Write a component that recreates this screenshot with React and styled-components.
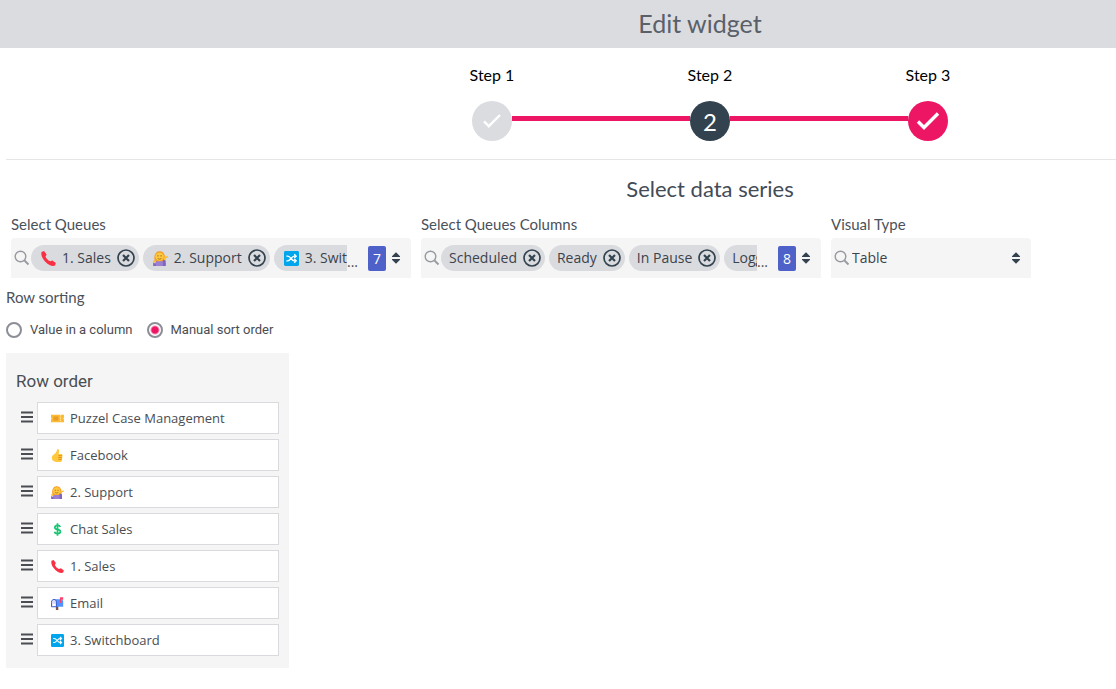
import React, { useState } from "react";
import styled, { createGlobalStyle } from "styled-components";

const GlobalStyle = createGlobalStyle`
  * {
    box-sizing: border-box;
  }

  body {
    margin: 0;
    background: #fff;
    color: #4a4d52;
    font-family: "Open Sans", sans-serif;
    font-size: 14px;
    overflow-x: hidden;
  }
`;

const Header = styled.header`
  display: flex;
  align-items: center;
  justify-content: center;
  height: 48px;
  padding: 0 0 2px 284px;
  background: #dbdce0;
`;

const Title = styled.h1`
  margin: 0;
  color: #5a6069;
  font-family: Lato, sans-serif;
  font-size: 25px;
  font-weight: 400;
  line-height: 32px;
`;

const Content = styled.main`
  padding-left: 6px;
`;

const Steps = styled.ol`
  display: flex;
  justify-content: center;
  margin: 0;
  padding: 15px 0 18px 298px;
  border-bottom: 1px solid #e6e6e8;
  list-style: none;
`;

const StepItem = styled.li`
  width: 218px;
`;

const StepLabel = styled.div`
  margin-bottom: 14px;
  color: #000;
  font-family: Lato, sans-serif;
  font-size: 16px;
  line-height: 24px;
  text-align: center;
`;

const Track = styled.div`
  display: flex;
  align-items: center;
`;

const Line = styled.span`
  flex: 1;
  height: 5px;
  margin-bottom: 5px;
  background: ${(props) => (props.$hidden ? "transparent" : "#ed1664")};
`;

const StepButton = styled.button`
  display: flex;
  align-items: center;
  justify-content: center;
  width: 40px;
  height: 40px;
  padding: 0;
  border: 0;
  border-radius: 50%;
  background: ${(props) => props.$color};
  color: #fff;
  font-family: Lato, sans-serif;
  font-size: 24px;
`;

const SectionTitle = styled.h2`
  margin: 15px 0 12px;
  padding-left: 298px;
  color: #434b56;
  font-family: Lato, sans-serif;
  font-size: 22px;
  font-weight: 400;
  line-height: 28px;
  text-align: center;
`;

const Fields = styled.div`
  display: flex;
  gap: 10px;
  padding-left: 5px;
`;

const Field = styled.div`
  width: ${(props) => (props.$narrow ? "200px" : "400px")};
`;

const Label = styled.label`
  display: block;
  margin-bottom: 5px;
  color: #4b515a;
  font-family: Lato, sans-serif;
  font-size: 15px;
  line-height: 18px;
`;

const Control = styled.div`
  display: flex;
  align-items: center;
  height: 40px;
  padding: 0 10px 0 3px;
  border-radius: 4px 4px 0 0;
  background: #f5f5f5;
`;

const Chips = styled.div`
  display: flex;
  flex: 1;
  gap: 4px;
  min-width: 0;
  margin-left: 1px;
  overflow: hidden;
`;

const ChipBox = styled.span`
  display: flex;
  flex: none;
  align-items: center;
  gap: 6px;
  height: 26px;
  padding: 0 4px 0 ${(props) => (props.$icon ? "10px" : "8px")};
  border-radius: 13px;
  background: #dadbdf;
  color: #3c434c;
  line-height: 20px;
`;

const RemoveButton = styled.button`
  display: flex;
  padding: 0;
  border: 0;
  background: none;
  color: #33424f;
`;

const More = styled.span`
  padding-top: 8px;
  width: 21px;
  line-height: 20px;
`;

const Count = styled.span`
  width: 18px;
  border-radius: 2px;
  background: #4d61c9;
  color: #fff;
  line-height: 25px;
  text-align: center;
`;

const ToggleButton = styled.button`
  display: flex;
  margin-left: 5px;
  padding: 0;
  border: 0;
  background: none;
`;

const Select = styled.select`
  flex: 1;
  min-width: 0;
  padding: 0 2px;
  border: 0;
  appearance: none;
  background: none;
  color: #3c434c;
  font-family: inherit;
  font-size: 14px;
  line-height: 20px;
`;

const Sorting = styled.fieldset`
  margin: 10px 0 0;
  padding: 0;
  border: 0;
`;

const Legend = styled.legend`
  padding: 0;
  color: #4b515a;
  font-family: Lato, sans-serif;
  font-size: 15px;
  line-height: 18px;
`;

const Radios = styled.div`
  display: flex;
  gap: 14px;
  padding: 14px 0;
`;

const RadioLabel = styled.label`
  display: flex;
  align-items: center;
  gap: 8px;
  color: #4a4d52;
  font-family: Roboto, sans-serif;
  font-size: 13px;
  line-height: 19px;
`;

const Radio = styled.input`
  width: 16px;
  height: 16px;
  margin: 0;
  border: 2px solid #8b8e97;
  border-radius: 50%;
  appearance: none;
  background: #fff;

  &:checked {
    background: radial-gradient(circle, #ed1664 3px, #fff 5px);
  }
`;

const Panel = styled.section`
  width: 283px;
  padding: 16px 10px 12px;
  background: #f5f5f5;
`;

const PanelTitle = styled.h3`
  margin: 0 0 9px;
  color: #4a4d52;
  font-family: Roboto, sans-serif;
  font-size: 17px;
  font-weight: 400;
  line-height: 24px;
`;

const Rows = styled.ul`
  display: grid;
  gap: 5px;
  margin: 0;
  padding: 0 0 0 4px;
  list-style: none;
`;

const Row = styled.li`
  display: flex;
  gap: 4px;
`;

const Handle = styled.button`
  display: flex;
  padding: 9px 0 0;
  border: 0;
  background: none;
`;

const RowName = styled.div`
  display: flex;
  flex: 1;
  align-items: center;
  gap: 6px;
  height: 32px;
  padding-left: 13px;
  border: 1px solid #d9dade;
  background: #fff;
  font-size: 13px;
`;

const emojis = {
  phone: (
    <path
      d="M.6 1 3.200 0 6 3.700 4.800 6.200c1.200 2.400 2.600 3.800 5 4.800l2.400-1 3.600 2.800-.8 2.700c-2.400 1.200-6.300.1-9.600-3.200C1.700 8.700-.4 4.500.6 1z"
      fill="#f92f43"
    />
  ),
  person: (
    <>
      <path d="M2 16v-3c0-2.500 2-3.500 5.500-3.500s6 1 6 3.500v3z" fill="#9b7fd1" />
      <path d="M2 11C.5 6 2 .2 7 .2s7 5.300 5 10.800z" fill="#f39a22" />
      <circle cx="7" cy="6" r="4.500" fill="#ffc83d" />
      <path d="M4.500 5.200h1.700M7.800 5.200h1.700M5 8q2 1.400 4 0" fill="none" stroke="#8a5a20" strokeWidth=".8" />
      <path d="m10.800 9.800 1.200-3.600 4-.8v1.400l-2.400 1-.6 3z" fill="#ffbd30" />
      <path d="m10.500 9 3 1v6h-3z" fill="#8164be" />
      <path d="M.2 12 3 14v2H.2z" fill="#8164be" />
      <path d="m.2 9.800 3 .7v2l-3-.7z" fill="#ffbd30" />
    </>
  ),
  shuffle: (
    <>
      <rect width="16" height="16" rx="1.500" fill="#00a6ed" />
      <path
        d="M2.500 5.500H4c3 0 4 5 7 5h2M2.500 10.500H4c3 0 4-5 7-5h2M11 3.500l2 2-2 2M11 8.500l2 2-2 2"
        fill="none"
        stroke="#fff"
        strokeWidth="1.4"
      />
    </>
  ),
  ticket: (
    <>
      <path d="M0 3.500h16v3.500l-1 1 1 1v3.500H0V9l1-1-1-1z" fill="#fcb932" />
      <path d="M3 5.500h6v5H3z" fill="#e89d28" />
      <path d="M11.500 3.500v9" stroke="#fff0bd" strokeDasharray="2 1" />
    </>
  ),
  thumb: (
    <>
      <path
        d="M7.500.3c1.700-.5 2.700.7 2.500 2.200L9.500 6H12c1.700 0 2.200.8 2.100 2l-.6 5.500c-.2 1.700-1 2.500-2.500 2.500H6.500C3.200 16 1 14 1 11.200c0-2.200 1-3.500 2.900-4.700C6 5 7.200 3 7.500.3z"
        fill="#ffc83d"
      />
      <path d="M9 8.200h4.500M9 10.500h4.300M9 12.800h4" stroke="#d67d00" strokeWidth=".9" />
    </>
  ),
  dollar: (
    <path
      d="M11.500 5C11 3.700 9.800 3 8 3 6 3 4.700 4 4.700 5.400 4.700 8.800 11.600 7 11.600 10.500c0 1.500-1.400 2.500-3.600 2.500-2 0-3.300-.8-3.700-2.300M8 .3v15.400"
      fill="none"
      stroke="#16c672"
      strokeWidth="2.100"
    />
  ),
  mailbox: (
    <>
      <path d="M6 11h3v5H6z" fill="#7d5144" />
      <path d="M4 2.800h8.500C14.500 2.800 15 5 15 6.500V12H4z" fill="#5092ff" />
      <path d="M.6 12V6.500C.6 4.200 2 3 3.700 3s3 1.200 3 3.500V12z" fill="#dcd8f5" stroke="#2d53c7" strokeWidth="1.1" />
      <path d="M2 8.500h3.500V11H2z" fill="#fff" />
      <path d="M11 7.500V.3h4v3.200h-2.600v4z" fill="#f8446d" />
    </>
  ),
};

const Emoji = ({ name, size }) => (
  <svg width={size} height={size} viewBox="0 0 16 16" aria-hidden="true">
    {emojis[name]}
  </svg>
);

const SearchIcon = () => (
  <svg width="16" height="16" viewBox="0 0 16 16" fill="none" stroke="#96999f" aria-hidden="true">
    <circle cx="6.500" cy="6.500" r="5.300" strokeWidth="1.4" />
    <path d="m10.500 10.500 4 4" strokeWidth="1.8" />
  </svg>
);

const SortIcon = () => (
  <svg width="10" height="12" viewBox="0 0 10 12" fill="#33424f" aria-hidden="true">
    <path d="M5 .3 9 4.200V5H1v-.8zM1 7h8v.8l-4 3.900-4-3.900z" />
  </svg>
);

const RemoveIcon = () => (
  <svg width="18" height="18" viewBox="0 0 18 18" fill="none" stroke="currentColor" aria-hidden="true">
    <circle cx="9" cy="9" r="8" strokeWidth="1.7" />
    <path d="m6 6 6 6m0-6-6 6" strokeWidth="2.2" />
  </svg>
);

const CheckIcon = ({ small }) => (
  <svg width={small ? 20 : 24} height={small ? 16 : 20} viewBox="0 0 24 20" fill="none" aria-hidden="true">
    <path d="m2 10.500 6 6L22 2.500" stroke="#fff" strokeWidth={small ? 3 : 3.4} />
  </svg>
);

const BarsIcon = () => (
  <svg width="13" height="13" viewBox="0 0 13 13" fill="none" stroke="#4a4d52" aria-hidden="true">
    <path d="M1 1.500h12M1 6h12M1 10.500h12" strokeWidth="2" />
  </svg>
);

const queues = [
  { name: "1. Sales", icon: "phone" },
  { name: "2. Support", icon: "person" },
  { name: "3. Switchboard", icon: "shuffle" },
];

const columns = [
  { name: "Scheduled" },
  { name: "Ready" },
  { name: "In Pause" },
  { name: "Logged on" },
];

const rows = [
  { name: "Puzzel Case Management", icon: "ticket" },
  { name: "Facebook", icon: "thumb" },
  { name: "2. Support", icon: "person" },
  { name: "Chat Sales", icon: "dollar" },
  { name: "1. Sales", icon: "phone" },
  { name: "Email", icon: "mailbox" },
  { name: "3. Switchboard", icon: "shuffle" },
];

const MultiSelect = ({ id, label, items, count }) => (
  <Field role="group" aria-labelledby={id}>
    <Label as="div" id={id}>{label}</Label>
    <Control>
      <SearchIcon />
      <Chips>
        {items.map((item) => (
          <ChipBox key={item.name} $icon={item.icon}>
            {item.icon && <Emoji name={item.icon} size={15} />}
            <span>{item.name}</span>
            <RemoveButton type="button" aria-label={`Remove ${item.name}`}>
              <RemoveIcon />
            </RemoveButton>
          </ChipBox>
        ))}
      </Chips>
      <More>...</More>
      <Count>{count}</Count>
      <ToggleButton type="button" aria-label={`Open ${label}`}>
        <SortIcon />
      </ToggleButton>
    </Control>
  </Field>
);

const App = () => {
  const [sorting, setSorting] = useState("manual");

  return (
    <>
      <GlobalStyle />
      <Header>
        <Title>Edit widget</Title>
      </Header>
      <Content>
        <Steps>
          <StepItem>
            <StepLabel>Step 1</StepLabel>
            <Track>
              <Line $hidden />
              <StepButton type="button" $color="#dbdce0" aria-label="Step 1">
                <CheckIcon small />
              </StepButton>
              <Line />
            </Track>
          </StepItem>
          <StepItem>
            <StepLabel>Step 2</StepLabel>
            <Track>
              <Line />
              <StepButton type="button" $color="#33424f" aria-current="step">2</StepButton>
              <Line />
            </Track>
          </StepItem>
          <StepItem>
            <StepLabel>Step 3</StepLabel>
            <Track>
              <Line />
              <StepButton type="button" $color="#ed1664" aria-label="Step 3">
                <CheckIcon />
              </StepButton>
              <Line $hidden />
            </Track>
          </StepItem>
        </Steps>

        <SectionTitle>Select data series</SectionTitle>
        <Fields>
          <MultiSelect id="queues" label="Select Queues" items={queues} count={7} />
          <MultiSelect id="columns" label="Select Queues Columns" items={columns} count={8} />
          <Field $narrow>
            <Label htmlFor="visual">Visual Type</Label>
            <Control>
              <SearchIcon />
              <Select id="visual" defaultValue="Table">
                <option>Table</option>
              </Select>
              <SortIcon />
            </Control>
          </Field>
        </Fields>

        <Sorting>
          <Legend>Row sorting</Legend>
          <Radios>
            <RadioLabel>
              <Radio
                type="radio"
                name="sorting"
                checked={sorting === "column"}
                onChange={() => setSorting("column")}
              />
              Value in a column
            </RadioLabel>
            <RadioLabel>
              <Radio
                type="radio"
                name="sorting"
                checked={sorting === "manual"}
                onChange={() => setSorting("manual")}
              />
              Manual sort order
            </RadioLabel>
          </Radios>
        </Sorting>

        <Panel>
          <PanelTitle>Row order</PanelTitle>
          <Rows>
            {rows.map((row) => (
              <Row key={row.name}>
                <Handle type="button" aria-label={`Move ${row.name}`}>
                  <BarsIcon />
                </Handle>
                <RowName>
                  <Emoji name={row.icon} size={13} />
                  {row.name}
                </RowName>
              </Row>
            ))}
          </Rows>
        </Panel>
      </Content>
    </>
  );
};

export default App;
